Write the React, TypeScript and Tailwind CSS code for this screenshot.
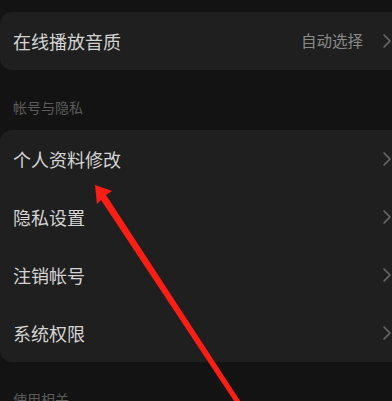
import { ChevronRight } from "lucide-react";

const font = { fontFamily: '"Noto Sans CJK SC", "Noto Sans", sans-serif' };

function Row({ title, value }: { title: string; value?: string }) {
  return (
    <div className="flex h-[58px] items-center pl-[13px] pr-0">
      <span className="flex-1 text-[18px] text-[#d4d4d4]">{title}</span>
      {value && <span className="mr-[12px] text-[15.5px] text-[#8a8a8a]">{value}</span>}
      <ChevronRight className="mr-[-7px] h-[24px] w-[24px] text-[#6b6b6b]" strokeWidth={1.6} />
    </div>
  );
}

function SectionLabel({ children }: { children: string }) {
  return (
    <div className="flex h-[60px] items-end pb-[12px] pl-[13px] text-[14px] text-[#5c5c5c]">
      {children}
    </div>
  );
}

export default function App() {
  return (
    <div className="relative h-[401px] w-[392px] overflow-hidden bg-[#131313]" style={font}>
      <div className="pt-[12px]">
        <div className="rounded-l-xl bg-[#1f1f1f]">
          <Row title="在线播放音质" value="自动选择" />
        </div>
        <SectionLabel>帐号与隐私</SectionLabel>
        <div className="rounded-l-xl bg-[#1f1f1f]">
          <Row title="个人资料修改" />
          <Row title="隐私设置" />
          <Row title="注销帐号" />
          <Row title="系统权限" />
        </div>
        <SectionLabel>使用相关</SectionLabel>
      </div>

      <svg className="pointer-events-none absolute left-0 top-0" width="392" height="401" viewBox="0 0 392 401">
        <polygon
          points="95,185 112,191 106,195 246,410 240,410 101,200 97,204"
          fill="#fa1e14"
        />
      </svg>
    </div>
  );
}
